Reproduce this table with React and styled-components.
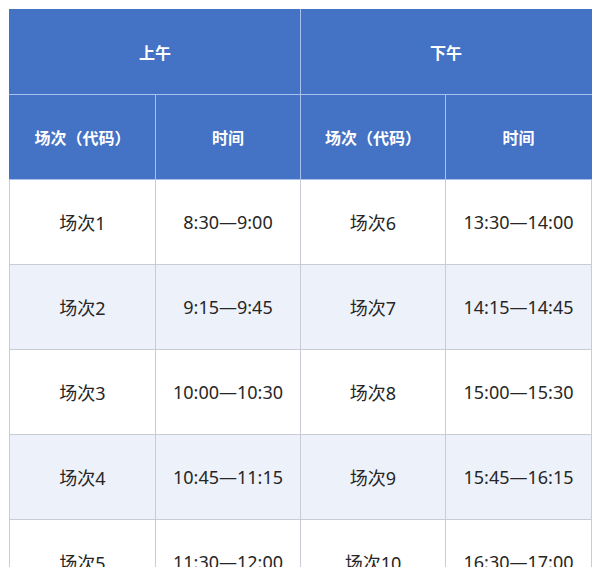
import React from "react";
import styled, { createGlobalStyle } from "styled-components";

const GlobalStyle = createGlobalStyle`
  body {
    margin: 0;
    background: #ffffff;
    font-family: "Noto Sans", "Noto Sans CJK SC", sans-serif;
  }
`;

const rows = [
  ["场次1", "8:30—9:00", "场次6", "13:30—14:00"],
  ["场次2", "9:15—9:45", "场次7", "14:15—14:45"],
  ["场次3", "10:00—10:30", "场次8", "15:00—15:30"],
  ["场次4", "10:45—11:15", "场次9", "15:45—16:15"],
  ["场次5", "11:30—12:00", "场次10", "16:30—17:00"],
];

const App = () => {
  return (
    <Page>
      <GlobalStyle />
      <Table>
        <colgroup>
          <col style={{ width: 146 }} />
          <col style={{ width: 145 }} />
          <col style={{ width: 145 }} />
          <col style={{ width: 146 }} />
        </colgroup>
        <thead>
          <tr>
            <HeadCell colSpan={2}>上午</HeadCell>
            <HeadCell colSpan={2}>下午</HeadCell>
          </tr>
          <tr>
            <HeadCell>场次（代码）</HeadCell>
            <HeadCell>时间</HeadCell>
            <HeadCell>场次（代码）</HeadCell>
            <HeadCell>时间</HeadCell>
          </tr>
        </thead>
        <tbody>
          {rows.map((r, i) => (
            <Row key={i} $alt={i % 2 === 1}>
              {r.map((c, j) => (
                <Cell key={j}>{c}</Cell>
              ))}
            </Row>
          ))}
        </tbody>
      </Table>
    </Page>
  );
};

const Page = styled.div`
  padding: 9px 0 0 9px;
  width: 600px;
  height: 567px;
  box-sizing: border-box;
  overflow: hidden;
`;

const Table = styled.table`
  border-collapse: collapse;
  table-layout: fixed;
  width: 582px;
`;

const HeadCell = styled.th`
  height: 84px;
  padding: 0;
  background: #4472c4;
  color: #ffffff;
  font-family: "Noto Sans CJK SC", sans-serif;
  font-size: 16px;
  font-weight: 700;
  text-align: center;
  vertical-align: middle;
  border: 1px solid #a9c1ee;
  border-top-color: #4472c4;
  &:first-child {
    border-left-color: #4472c4;
  }
  &:last-child {
    border-right-color: #4472c4;
  }
`;

const Row = styled.tr`
  background: ${({ $alt }) => ($alt ? "#edf1fa" : "#ffffff")};
`;

const Cell = styled.td`
  height: 84px;
  padding: 0;
  border: 1px solid #c9ccd6;
  text-align: center;
  vertical-align: middle;
  font-size: 18px;
  color: #262626;
  white-space: nowrap;
`;

export default App;
